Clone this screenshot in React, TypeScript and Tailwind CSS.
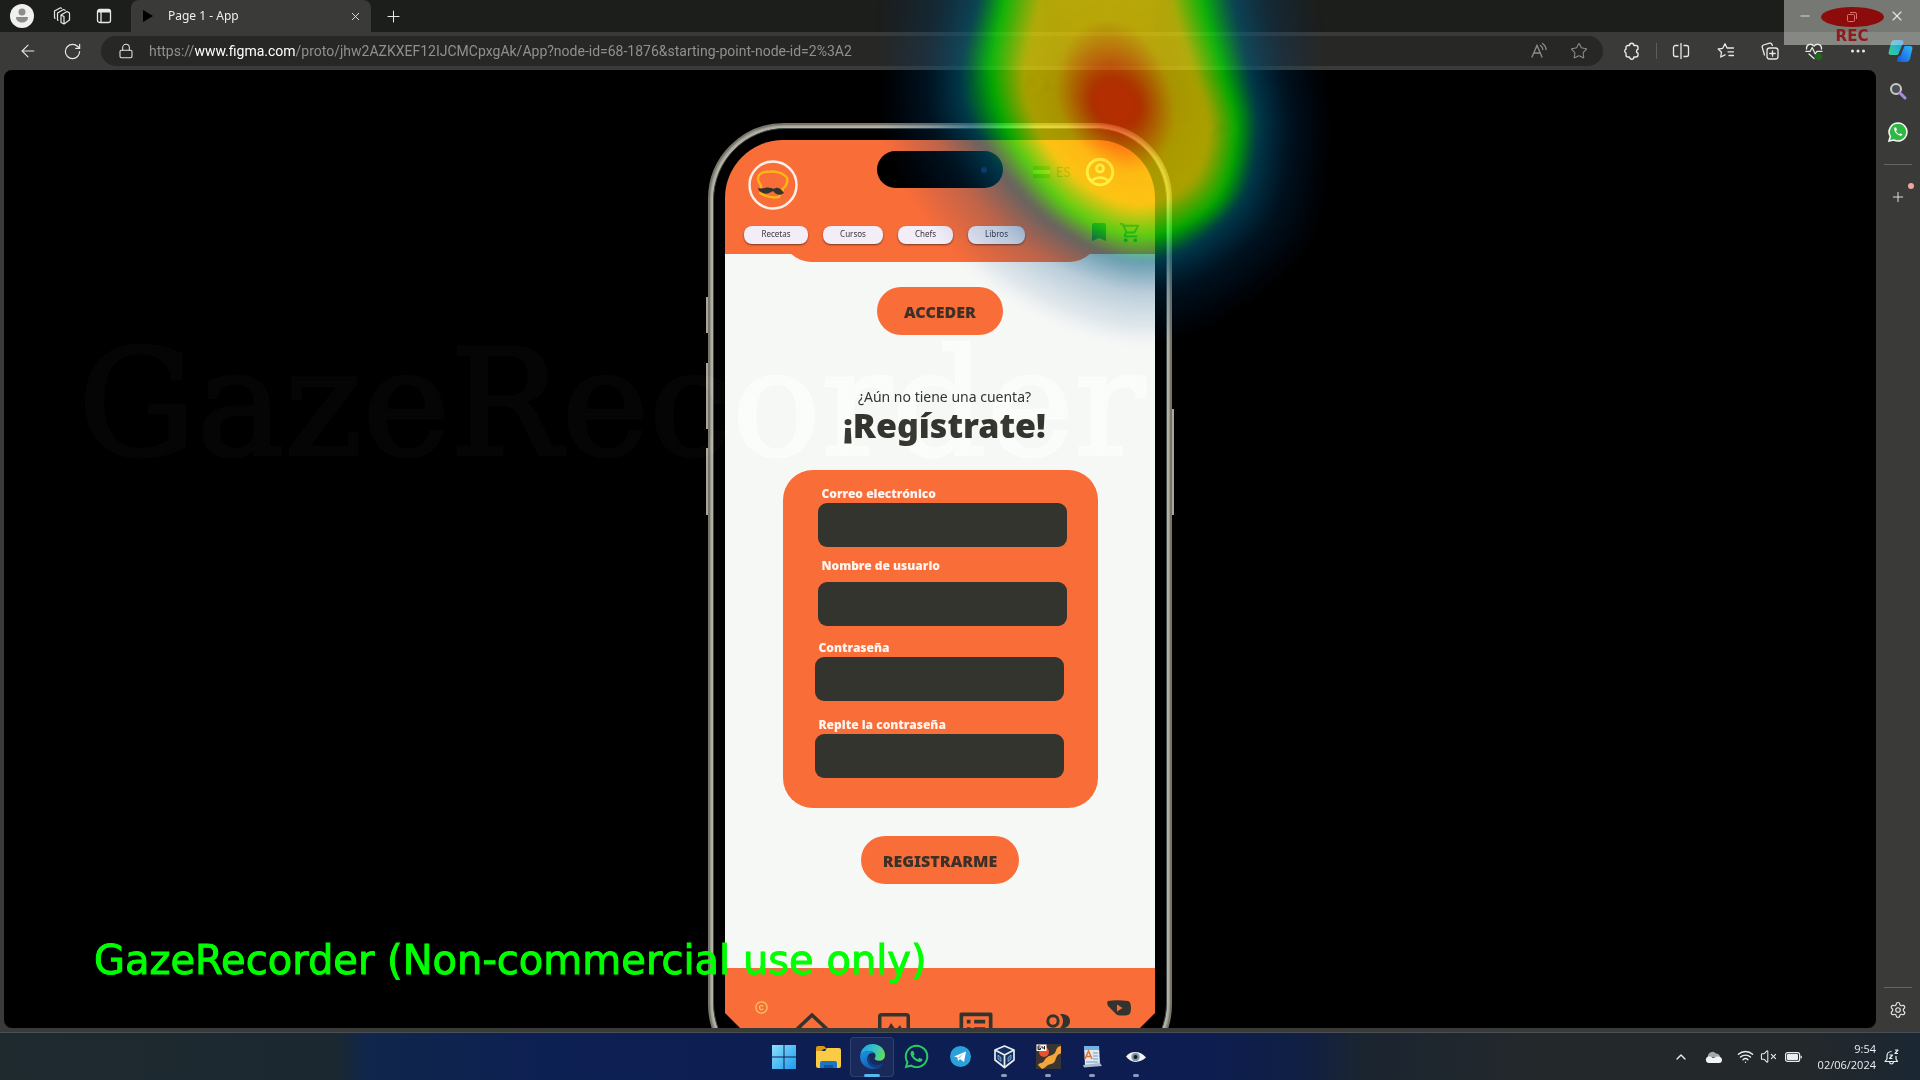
import React from "react";
import { Lock, Star, X, Plus, Minus, ChevronUp, Wifi, VolumeX, Settings, ArrowLeft, RotateCw } from "lucide-react";
import { MdBookmark, MdOutlineShoppingCart, MdOutlineAccountCircle, MdListAlt, MdCopyright } from "react-icons/md";
import { FaWhatsapp } from "react-icons/fa";

type Pt = [number, number];
type Contour = { pts: Pt[]; color: [number, number, number]; alpha: number };

const contours: Contour[] = [
  {
    pts: [[1100, -220], [1310, -100], [1318, 0], [1325, 70], [1330, 150], [1300, 262], [1155, 345], [995, 290], [895, 170], [880, 70], [880, 0], [883, -100]],
    color: [0, 60, 140],
    alpha: 0,
  },
  {
    pts: [[1100, -180], [1265, -80], [1270, 0], [1283, 70], [1290, 140], [1262, 233], [1152, 293], [1025, 248], [940, 145], [926, 70], [936, 0], [944, -80]],
    color: [0, 75, 130],
    alpha: 0.24,
  },
  {
    pts: [[1100, -140], [1230, -60], [1233, 0], [1249, 70], [1258, 135], [1233, 212], [1147, 261], [1050, 220], [975, 130], [962, 70], [978, 0], [985, -60]],
    color: [0, 95, 125],
    alpha: 0.62,
  },
  {
    pts: [[1103, -120], [1200, -60], [1203, 0], [1223, 70], [1237, 132], [1216, 202], [1147, 237], [1073, 212], [1012, 140], [991, 70], [1003, 0], [1010, -60]],
    color: [0, 255, 0],
    alpha: 0.7,
  },
  {
    pts: [[1107, -90], [1165, -60], [1170, 0], [1193, 70], [1210, 128], [1191, 182], [1137, 205], [1081, 180], [1039, 130], [1025, 75], [1041, 0], [1048, -60]],
    color: [255, 240, 0],
    alpha: 0.7,
  },
  {
    pts: [[1107, 22], [1135, 32], [1157, 55], [1172, 88], [1175, 122], [1162, 157], [1132, 173], [1094, 158], [1068, 130], [1055, 95], [1061, 57], [1079, 32]],
    color: [255, 225, 0],
    alpha: 0.7,
  },
  {
    pts: [[1112, 80], [1124, 84], [1134, 92], [1139, 103], [1138, 115], [1130, 124], [1117, 127], [1104, 122], [1096, 112], [1093, 101], [1095, 91], [1102, 83]],
    color: [255, 66, 0],
    alpha: 0.7,
  },
];

function smoothPath(pts: Pt[]) {
  const n = pts.length;
  let d = `M${pts[0][0]} ${pts[0][1]}`;
  for (let i = 0; i < n; i++) {
    const a = pts[(i - 1 + n) % n];
    const b = pts[i];
    const c = pts[(i + 1) % n];
    const e = pts[(i + 2) % n];
    d += `C${b[0] + (c[0] - a[0]) / 6} ${b[1] + (c[1] - a[1]) / 6} ${c[0] - (e[0] - b[0]) / 6} ${c[1] - (e[1] - b[1]) / 6} ${c[0]} ${c[1]}`;
  }
  return d + "Z";
}

const STEPS = 14;
const rings: { d: string; fill: string }[] = [];
for (let k = 0; k < contours.length - 1; k++) {
  const a = contours[k];
  const b = contours[k + 1];
  const at = (t: number) => smoothPath(a.pts.map((p, i) => [p[0] + (b.pts[i][0] - p[0]) * t, p[1] + (b.pts[i][1] - p[1]) * t] as Pt));
  for (let s = 0; s < STEPS; s++) {
    const t = (s + 0.5) / STEPS;
    const c = a.color.map((v, i) => Math.round(v + (b.color[i] - v) * t));
    rings.push({
      d: at(s / STEPS) + at((s + 1) / STEPS),
      fill: `rgba(${c[0]},${c[1]},${c[2]},${a.alpha + (b.alpha - a.alpha) * t})`,
    });
  }
}
const core = contours[contours.length - 1];
rings.push({ d: smoothPath(core.pts), fill: `rgba(${core.color.join(",")},${core.alpha})` });

function Heatmap() {
  return (
    <svg className="pointer-events-none absolute top-0 left-1/2 z-20 -ml-[960px] h-[400px] w-[1920px]" viewBox="0 0 1920 400" aria-hidden="true">
      <defs>
        <filter id="soft" x="-10%" y="-10%" width="120%" height="120%" colorInterpolationFilters="sRGB">
          <feGaussianBlur stdDeviation="3" />
        </filter>
      </defs>
      <g filter="url(#soft)">
        {rings.map((r, i) => (
          <path key={i} d={r.d} fill={r.fill} fillRule="evenodd" />
        ))}
      </g>
    </svg>
  );
}

function IconButton({ label, className = "", children }: { label: string; className?: string; children: React.ReactNode }) {
  return (
    <button aria-label={label} className={`flex shrink-0 items-center justify-center text-[#e8e9e6] ${className}`}>
      {children}
    </button>
  );
}

function TitleBar() {
  return (
    <header className="flex h-8 shrink-0 items-center bg-[#1c1e1b]">
      <IconButton label="Profile" className="w-11">
        <svg width="24" height="24" viewBox="0 0 24 24">
          <circle cx="12" cy="12" r="12" fill="#f0f1ef" />
          <circle cx="12" cy="8" r="3.500" fill="#8c8d8b" />
          <path d="M6 13h12c0 4-3 5.500-6 5.500s-6-1.500-6-5.500z" fill="#8c8d8b" />
        </svg>
      </IconButton>
      <IconButton label="Workspaces" className="w-9">
        <svg width="18" height="18" viewBox="0 0 18 18" fill="none" stroke="currentColor" strokeWidth="1.200" strokeLinejoin="round">
          <path d="M8 8l6-3.500 2.500 1.500v7L11 17l-3-1.500zM8 8l3 1.500V17" />
          <path d="M5.500 13.500l-1-.5V6l6-3.500 2 1M2.500 11.500l-1-.5V4l6-3.200 1.500.7" />
        </svg>
      </IconButton>
      <IconButton label="Tab actions" className="w-12">
        <svg width="16" height="16" viewBox="0 0 16 16" fill="none" stroke="currentColor" strokeWidth="1.300">
          <rect x="1.500" y="1.500" width="13" height="13" rx="2" />
          <path d="M2 3h12" strokeWidth="3" />
          <path d="M5 4v10" />
        </svg>
      </IconButton>
      <div className="ml-[3px] flex h-full w-60 items-center rounded-t-lg bg-[#3a3b38] pr-2 pl-3">
        <svg width="10" height="12" viewBox="0 0 10 12">
          <path d="M0 0l10 6-10 6z" fill="#000" />
        </svg>
        <span className="ml-[15px] grow font-['Noto_Sans',sans-serif] text-[12px] text-[#eeefec]">Page 1 - App</span>
        <IconButton label="Close tab" className="w-4">
          <X size={13} strokeWidth={1.7} />
        </IconButton>
      </div>
      <IconButton label="New tab" className="w-11">
        <Plus size={19} strokeWidth={1.3} />
      </IconButton>
      <div className="grow" />
      <IconButton label="Minimize" className="w-[46px]">
        <Minus size={14} strokeWidth={1.5} />
      </IconButton>
      <IconButton label="Restore" className="w-[46px]">
        <svg width="12" height="12" viewBox="0 0 12 12" fill="none" stroke="currentColor">
          <rect x="1.500" y="3.500" width="7" height="7" rx="1" />
          <path d="M4 1.500h5a1.500 1.500 0 0 1 1.500 1.500v5" />
        </svg>
      </IconButton>
      <IconButton label="Close" className="w-[46px]">
        <X size={16} strokeWidth={1.7} />
      </IconButton>
    </header>
  );
}

function Toolbar() {
  return (
    <nav className="flex h-[38px] shrink-0 items-center bg-[#3a3b38] pl-1 font-['Noto_Sans',sans-serif]">
      <IconButton label="Back" className="w-12">
        <ArrowLeft size={20} strokeWidth={1.3} />
      </IconButton>
      <IconButton label="Refresh" className="w-10">
        <RotateCw size={19} strokeWidth={1.5} />
      </IconButton>
      <div className="ml-[9px] flex h-[30px] min-w-0 grow items-center rounded-full bg-[#272826] pl-[17px]">
        <Lock size={16} strokeWidth={1.6} className="shrink-0 text-[#e0e1de]" />
        <a href="#address" className="ml-[15px] grow truncate font-[Roboto,sans-serif] text-[14px] text-[#90918f]">
          https://<span className="text-white">www.figma.com</span>/proto/jhw2AZKXEF12IJCMCpxgAk/App?node-id=68-1876&amp;starting-point-node-id=2%3A2
        </a>
        <IconButton label="Read aloud" className="w-10">
          <svg width="18" height="18" viewBox="0 0 18 18" fill="none" stroke="#8d8e8b" strokeWidth="1.300" strokeLinecap="round">
            <path d="M2 15L7 3.500 12 15M3.800 11h6.400M10.500 3.500c1.500 1 2.300 2.500 2.300 4M12.500 1.500c2.200 1.500 3.500 3.500 3.500 6" />
          </svg>
        </IconButton>
        <IconButton label="Add to favorites" className="mr-1 w-10">
          <Star size={18} strokeWidth={1.4} color="#8d8e8b" />
        </IconButton>
      </div>
      <IconButton label="Extensions" className="ml-2 w-[42px]">
        <svg width="18" height="18" viewBox="0 0 18 18" fill="none" stroke="currentColor" strokeWidth="1.400" strokeLinejoin="round">
          <path d="M6.500 3.500a2.200 2.200 0 0 1 4.400 0H13a2 2 0 0 1 2 2v1.700a2 2 0 0 0 0 3.900V13a2 2 0 0 1-2 2h-2.100a2.200 2.200 0 0 1-4.400 0H5a2 2 0 0 1-2-2v-1.900a2.200 2.200 0 0 1 0-4V5.500a2 2 0 0 1 2-2z" />
        </svg>
      </IconButton>
      <div className="ml-[3px] h-4 w-px bg-[#5d5e5b]" />
      <IconButton label="Split screen" className="w-[47px]">
        <svg width="18" height="18" viewBox="0 0 18 18" fill="none" stroke="currentColor" strokeWidth="1.300">
          <path d="M6.500 3.500h-3a2 2 0 0 0-2 2v7a2 2 0 0 0 2 2h3M11.500 3.500h3a2 2 0 0 1 2 2v7a2 2 0 0 1-2 2h-3M9 1v16" />
        </svg>
      </IconButton>
      <IconButton label="Favorites" className="w-11">
        <svg width="18" height="18" viewBox="0 0 18 18" fill="none" stroke="currentColor" strokeWidth="1.300" strokeLinejoin="round" strokeLinecap="round">
          <path d="M10 6L8 1.800 5.700 6.300 1.200 7l3.300 3.200-.8 4.800L8 12.800M10 6h6.500M11 9.800h5.500M12 13.500h4.500" />
        </svg>
      </IconButton>
      <IconButton label="Collections" className="w-11">
        <svg width="18" height="18" viewBox="0 0 18 18" fill="none" stroke="currentColor" strokeWidth="1.300" strokeLinejoin="round" strokeLinecap="round">
          <rect x="6" y="6" width="11" height="11" rx="2.500" />
          <path d="M11.500 8.800v5.400M8.800 11.500h5.400M3.500 13L1.300 5.500A2 2 0 0 1 2.600 3l6-1.800A2 2 0 0 1 11 2.500l.3 1" />
        </svg>
      </IconButton>
      <IconButton label="Browser essentials" className="w-11">
        <svg width="18" height="18" viewBox="0 0 18 18" fill="none" stroke="currentColor" strokeWidth="1.300" strokeLinejoin="round" strokeLinecap="round">
          <path d="M1.500 7C1 3 5.500.5 9 4c3.500-3.500 8-1 7.500 3M.8 9.300h4.400l2-3.800 3 6.500 1.800-2.700h5M4 12l5 4.500" />
          <circle cx="13.500" cy="14.500" r="3.500" fill="#1c6b1d" stroke="none" />
        </svg>
      </IconButton>
      <IconButton label="More" className="w-11">
        <svg width="16" height="4" viewBox="0 0 16 4" fill="currentColor">
          <circle cx="2.500" cy="2" r="1.500" />
          <circle cx="8" cy="2" r="1.500" />
          <circle cx="13.500" cy="2" r="1.500" />
        </svg>
      </IconButton>
      <IconButton label="Copilot" className="w-10">
        <svg width="25" height="24" viewBox="0 0 25 24">
          <defs>
            <linearGradient id="cpa" x1="0" y1="1" x2="1" y2="0">
              <stop offset="0" stopColor="#3bd08b" />
              <stop offset="0.500" stopColor="#27b6c9" />
              <stop offset="1" stopColor="#1c8ff0" />
            </linearGradient>
            <linearGradient id="cpb" x1="0" y1="1" x2="1" y2="0">
              <stop offset="0" stopColor="#1656e0" />
              <stop offset="1" stopColor="#2fb8f8" />
            </linearGradient>
          </defs>
          <path d="M6 1h7q3 0 2.300 3L13 13q-1 3-4 3H3q-3 0-2.300-3L3 4q1-3 3-3z" fill="url(#cpa)" />
          <path d="M15 7h7q3 0 2.300 3L22 20q-1 3-4 3h-7q-3 0-1.500-3z" fill="url(#cpb)" />
          <path d="M15.500 6L11 17" stroke="#3a3b38" strokeWidth="2.500" />
        </svg>
      </IconButton>
    </nav>
  );
}

function WhatsappBadge() {
  return (
    <svg width="20" height="20" viewBox="0 0 20 20">
      <path d="M10 1a9 9 0 1 1-4.200 17L1 19l1.300-4.500A9 9 0 0 1 10 1z" fill="#2fb944" stroke="#f3f4f2" strokeWidth="1.600" />
      <path d="M6.500 5.500c-1 2 .5 5 2.500 6.500s4.300 2.500 5.500.8l-2-1.600-1.300 1C9.800 11.700 8.600 10.500 8 9l1-1.200-1-2.300z" fill="#fff" />
    </svg>
  );
}

function Sidebar() {
  return (
    <aside className="relative flex w-11 shrink-0 flex-col items-center bg-[#3a3b38] pt-3">
      <IconButton label="Search" className="h-[18px] w-8">
        <svg width="18" height="18" viewBox="0 0 18 18" fill="none">
          <circle cx="7" cy="7" r="5" stroke="#c9cac9" strokeWidth="2" fill="#4c5052" />
          <path d="M11 11l5 5" stroke="#a88be0" strokeWidth="3" strokeLinecap="round" />
        </svg>
      </IconButton>
      <IconButton label="WhatsApp" className="mt-[22px] h-5 w-8">
        <WhatsappBadge />
      </IconButton>
      <div className="mt-[22px] h-px w-7 bg-[#656663]" />
      <IconButton label="Add app" className="mt-6 h-4 w-8">
        <Plus size={16} strokeWidth={1.4} />
      </IconButton>
      <span className="absolute top-[113px] right-[6px] size-[6px] rounded-full bg-[#f0a5a0]" />
      <div className="grow" />
      <div className="h-px w-7 bg-[#656663]" />
      <IconButton label="Settings" className="my-[13px] h-[18px] w-8">
        <Settings size={18} strokeWidth={1.5} />
      </IconButton>
    </aside>
  );
}

function PhoneHeader() {
  return (
    <div className="relative z-10 flex flex-col rounded-t-[58px] bg-[#f96d39] pb-[9px]">
      <div className="flex h-[85px] items-start pt-[11px] pl-[23px]">
        <svg className="mt-[9px]" width="50" height="50" viewBox="0 0 50 50" fill="none">
          <circle cx="25" cy="25" r="23.500" stroke="#fff0ea" strokeWidth="2.500" />
          <path d="M13 27c0-4-3-4-3-8 0-5 3-6 7-7 7-1 15 0 19 3 4 2 4 6 2 10-1 3-4 2-4 7M12 33c6 4 14 5 19 4l2-5" stroke="#fbb315" strokeWidth="2.500" strokeLinecap="round" />
          <path d="M10 28c4 2 8-2 13 0 2 1 3 1 5 0 4-1 7 4 8 5-4 3-8 2-11-2-2 1-5 4-10 2-3-1-5-3-5-5z" fill="#34342e" />
        </svg>
        <div className="ml-[79px] flex h-[37px] w-[126px] items-center justify-end rounded-full bg-black pr-4">
          <span className="size-[6px] rounded-full bg-[#16206a]" />
        </div>
        <div className="mt-[15px] ml-[30px] flex h-3 w-[17px] flex-col justify-between">
          <span className="h-1 bg-[#b45c10]" />
          <span className="h-1 bg-[#f6a63a]" />
          <span className="h-1 bg-[#b45c10]" />
        </div>
        <span className="mt-3 ml-[6px] font-['Lato',sans-serif] text-[13px] leading-[18px] text-[#7b4a20]">ES</span>
        <IconButton label="Cuenta" className="mt-[4px] ml-3 size-[34px]">
          <MdOutlineAccountCircle size={34} color="#fff8c0" />
        </IconButton>
      </div>
      <div className="flex h-5 items-center pl-[19px] font-['Noto_Sans',sans-serif] text-[8px] leading-[16px] text-[#39343f]">
        <button className="h-[18px] w-16 rounded-lg bg-[#f2edf6] pb-[2px] shadow-[0_1px_2px_#00000080]">Recetas</button>
        <button className="ml-[15px] h-[18px] w-[60px] rounded-lg bg-[#f2edf6] pb-[2px] shadow-[0_1px_2px_#00000080]">Cursos</button>
        <button className="ml-[15px] h-[18px] w-[55px] rounded-lg bg-[#f2edf6] pb-[2px] shadow-[0_1px_2px_#00000080]">Chefs</button>
        <button className="ml-[15px] h-[18px] w-[57px] rounded-lg bg-[#f2edf6] pb-[2px] shadow-[0_1px_2px_#00000080]">Libros</button>
        <IconButton label="Guardados" className="mb-[6px] ml-[62px] w-6">
          <MdBookmark size={24} color="#34342e" />
        </IconButton>
        <IconButton label="Carrito" className="mb-[6px] ml-[7px] w-6">
          <MdOutlineShoppingCart size={23} color="#34342e" />
        </IconButton>
      </div>
    </div>
  );
}

function Field({ id, label, type, gap }: { id: string; label: string; type: string; gap: string }) {
  return (
    <div className={`flex flex-col ${gap}`}>
      <label htmlFor={id} className="pl-1 font-['Noto_Sans',sans-serif] text-[12px] leading-[17px] font-black text-[#fff5ee]">
        {label}
      </label>
      <input id={id} type={type} className="h-11 w-[249px] rounded-[9px] bg-[#34342e] px-3 text-white" />
    </div>
  );
}

function PhoneFooter() {
  return (
    <div className="relative flex h-[60px] items-start overflow-hidden bg-[#f96d39] [clip-path:polygon(0_0,100%_0,100%_45px,calc(100%-15px)_60px,15px_60px,0_45px)]">
      <MdCopyright className="mt-8 ml-[29px] shrink-0" size={15} color="#fbc75e" />
      <IconButton label="Inicio" className="mt-[45px] ml-[25px] w-9">
        <svg width="36" height="36" viewBox="0 0 36 36" fill="none" stroke="#34342e" strokeWidth="3.500">
          <path d="M1 18L18 2l17 16M6 14v20h24V14" />
        </svg>
      </IconButton>
      <IconButton label="Galería" className="mt-[45px] ml-12 w-8">
        <svg width="32" height="30" viewBox="0 0 32 30" fill="none" stroke="#34342e" strokeWidth="3.500">
          <rect x="1.750" y="1.750" width="28.500" height="26.500" rx="2" />
          <path d="M5 24l8-14 5 7 4-5 6 12z" fill="#34342e" stroke="none" />
        </svg>
      </IconButton>
      <IconButton label="Lista" className="mt-[38px] ml-11 w-11">
        <MdListAlt size={46} color="#34342e" />
      </IconButton>
      <IconButton label="Comunidad" className="mt-[46px] ml-12 w-6">
        <svg width="24" height="16" viewBox="0 0 24 16">
          <circle cx="7" cy="7" r="5.200" fill="none" stroke="#34342e" strokeWidth="3" />
          <path d="M14 0c4-.5 10 1 10 7s-6 8-10 7c4-4 4-10 0-14z" fill="#34342e" />
        </svg>
      </IconButton>
      <IconButton label="Vídeos" className="mt-8 ml-[37px] w-6">
        <svg width="24" height="16" viewBox="0 0 24 16">
          <path d="M1 1Q10-.5 21 1q3 1 3 7t-3 7q-5 1-11 0L1 6Q-.5 2 1 1z" fill="#34342e" />
          <path d="M10 4.500l5.500 3.500-5.500 3.500z" fill="#f96d39" />
        </svg>
      </IconButton>
    </div>
  );
}

function Phone() {
  return (
    <div className="relative w-[464px] shrink-0">
      <span className="absolute top-[174px] -left-[2px] h-9 w-1 bg-[#a9a698]" />
      <span className="absolute top-[240px] -left-[2px] h-[66px] w-1 bg-[#a9a698]" />
      <span className="absolute top-[325px] -left-[2px] h-[67px] w-1 bg-[#a9a698]" />
      <span className="absolute top-[286px] -right-[2px] h-[106px] w-1 bg-[#a9a698]" />
      <div className="relative rounded-[76px] border-2 border-[#77756a] bg-[#b5b3a7] p-[3px] shadow-[inset_0_0_2px_#55534a]">
        <div className="rounded-[72px] border border-[#3d4644] bg-black px-[11px] pt-[11px] pb-[46px]">
          <PhoneHeader />
          <div className="flex flex-col items-center bg-[#f6f8f6] pb-[84px]">
            <div className="-mt-[22px] h-[30px] w-[315px] rounded-b-[28px] bg-[#f96d39]" />
            <button className="mt-[25px] h-12 w-[126px] rounded-full bg-[#f96d39] pt-[2px] font-['Noto_Sans',sans-serif] text-[16px] font-black text-[#3c3027]">ACCEDER</button>
            <p className="mt-[52px] pl-[9px] font-['Noto_Sans',sans-serif] text-[14px] leading-5 text-[#34342e]">¿Aún no tiene una cuenta?</p>
            <h1 className="pl-[9px] font-['Noto_Sans',sans-serif] text-[34px] leading-9 font-black text-[#34342e]">¡Regístrate!</h1>
            <form className="mt-[27px] flex w-[315px] flex-col rounded-[30px] bg-[#f96d39] pt-[15px] pb-[30px] pl-8">
              <div className="flex flex-col pl-[3px]">
                <Field id="correo" label="Correo electrónico" type="email" gap="gap-px" />
                <div className="h-[10px]" />
                <Field id="usuario" label="Nombre de usuario" type="text" gap="gap-2" />
              </div>
              <div className="h-[13px]" />
              <Field id="clave" label="Contraseña" type="password" gap="gap-px" />
              <div className="h-[15px]" />
              <Field id="repite" label="Repite la contraseña" type="password" gap="gap-px" />
            </form>
            <button className="mt-7 h-12 w-[158px] rounded-full bg-[#f96d39] pt-[2px] font-['Noto_Sans',sans-serif] text-[16px] font-black text-[#3c3027]">REGISTRARME</button>
          </div>
          <PhoneFooter />
        </div>
      </div>
    </div>
  );
}

function EdgeLogo() {
  return (
    <svg width="25" height="25" viewBox="0 0 24 24">
      <defs>
        <linearGradient id="eg" x1="0" y1="0.300" x2="1" y2="0.500">
          <stop offset="0" stopColor="#1fa4e8" />
          <stop offset="0.600" stopColor="#35c6c0" />
          <stop offset="1" stopColor="#66dc54" />
        </linearGradient>
        <linearGradient id="eb" x1="0" y1="0" x2="0.600" y2="1">
          <stop offset="0" stopColor="#2196e3" />
          <stop offset="1" stopColor="#1254a8" />
        </linearGradient>
      </defs>
      <path d="M.2 11C1 4.500 6 0 12 0c7 0 12 5 12 10.500 0 4-3 5.500-5.500 5.500-3 0-4.500-1-4.500-2 0-.7 1-1 1-2.700C15 8.500 12 6.800 8.500 6.800 4.500 6.800 1.500 8.500.2 11z" fill="url(#eg)" />
      <path d="M.2 11C1.500 8.500 4.500 6.800 8.500 6.800c2 0 4 .5 5.200 1.700C9 8 7 11 7 14.500c0 5 4.500 8 8 8 2.500 0 4.500-1 6.500-2.200C19.500 22.800 16 24 12 24 5 24-.6 18 .2 11z" fill="url(#eb)" />
      <path d="M9.500 12c-1.500 4.500 2 8 6.500 8 3 0 5-1 6.300-1.300C20 22 17.500 23 15 22.500c-4.500 0-8-3.500-8-8 0-1.200.8-2.200 2.500-2.500z" fill="#0c3f86" />
    </svg>
  );
}

function TaskItem({ label, dot, children }: { label: string; dot?: boolean; children: React.ReactNode }) {
  return (
    <button aria-label={label} className="relative flex h-10 w-11 items-center justify-center">
      {children}
      {dot && <span className="absolute bottom-0 left-1/2 -ml-[3px] h-[3px] w-[6px] rounded-full bg-[#8d9bbd]" />}
    </button>
  );
}

function Taskbar() {
  return (
    <footer className="grid h-12 shrink-0 grid-cols-[1fr_auto_1fr] items-center border-t border-[#4a4e55] bg-[linear-gradient(90deg,#1f2a2f_0%,#1b2830_17.500%,#10264b_19%,#0d2052_28%,#0d1d52_62%,#101f42_68%,#1b2530_71%,#23282b_80%,#23282b_94%,#1b2733_100%)] font-['Noto_Sans',sans-serif] text-[#eceded]">
      <div />
      <div className="flex">
        <TaskItem label="Inicio">
          <svg width="24" height="24" viewBox="0 0 24 24">
            <defs>
              <linearGradient id="wn" x1="0" y1="0" x2="1" y2="1">
                <stop offset="0" stopColor="#8be0fb" />
                <stop offset="1" stopColor="#1b9bec" />
              </linearGradient>
            </defs>
            <path d="M0 0h11.500v11.500H0zM12.500 0H24v11.500H12.500zM0 12.500h11.500V24H0zM12.500 12.500H24V24H12.500z" fill="url(#wn)" />
          </svg>
        </TaskItem>
        <TaskItem label="Explorador de archivos">
          <svg width="25" height="24" viewBox="0 0 25 24">
            <path d="M0 3q0-2 2-2h6l3 3h-3l-8 6z" fill="#d99a16" />
            <path d="M0 6h9l2-3h12q2 0 2 2v16q0 2-2 2H2q-2 0-2-2z" fill="#fbcb45" />
            <path d="M4 23v-5q0-2 2-2h13q2 0 2 2v5z" fill="#1a76c2" />
            <path d="M8 20h9v3H8z" fill="#10569a" />
          </svg>
        </TaskItem>
        <div className="relative w-11 rounded border border-white/10 bg-white/5">
          <div className="-m-px">
            <TaskItem label="Microsoft Edge">
              <EdgeLogo />
            </TaskItem>
          </div>
          <span className="absolute -bottom-px left-1/2 -ml-2 h-[3px] w-4 rounded-full bg-[#58b8f0]" />
        </div>
        <TaskItem label="WhatsApp">
          <FaWhatsapp size={27} color="#27cc64" />
        </TaskItem>
        <TaskItem label="Telegram">
          <svg width="21" height="21" viewBox="0 0 21 21">
            <circle cx="10.500" cy="10.500" r="10.500" fill="#2ba1dc" />
            <path d="M4 10.500l12-5-2 10.500-4-3-2 2-.5-3.500z" fill="#fff" />
            <path d="M8 11.500l5.500-4-4 5z" fill="#9ccbea" />
          </svg>
        </TaskItem>
        <TaskItem label="VirtualBox" dot>
          <svg width="21" height="24" viewBox="0 0 21 24" fill="#14305f" stroke="#e8edf4" strokeWidth="1.700" strokeLinejoin="round">
            <path d="M10.500 1L20 5v10l-9.500 7.500L1 15V5z" />
            <path d="M1 5l9.500 5L20 5M10.500 10v12" />
            <path d="M4 10v4l3 2.500v-4zM14 12.500v4l3-2.500v-4z" fill="#2d5e9e" strokeWidth="0.500" />
          </svg>
        </TaskItem>
        <TaskItem label="Grabadora" dot>
          <svg width="25" height="25" viewBox="0 0 25 25">
            <rect width="25" height="25" fill="#3a3432" />
            <path d="M25 2c-7 1-3 7-9 9S10 14 8 17s-4 1-6 4l4 4c4-1 4-4 9-5s4-5 6-8 4-1 4-4z" fill="#f5a63a" />
            <circle cx="8" cy="8" r="5" fill="#e8512b" />
            <rect x="0.500" y="0.500" width="10" height="6.500" fill="#fff" />
            <path d="M4.500 2H2v3.500h2.500V4H2M6 2v2h2.500M8.500 2v3.500" stroke="#222" fill="none" />
          </svg>
        </TaskItem>
        <TaskItem label="Bloc de texto" dot>
          <svg width="20" height="23" viewBox="0 0 20 23">
            <path d="M2 1h15l1 19H3z" fill="#dfeaf4" />
            <path d="M2 1h15v4H2z" fill="#72b3e2" />
            <path d="M3 14L6.500 6 10 14M4.500 11.500h4" stroke="#e2762c" strokeWidth="1.600" fill="none" />
            <path d="M11 8h5M11 11h5M11 14h5M4 17h12" stroke="#6d9bc4" />
            <path d="M1 20l17-2 2 3-18 1.500z" fill="#a9bccd" />
          </svg>
        </TaskItem>
        <TaskItem label="GazeRecorder" dot>
          <svg width="20" height="12" viewBox="0 0 20 12">
            <path d="M0 5.500C5-.5 14-.5 20 6.500 13 12.500 5 12.500 0 5.500z" fill="#f2f4f6" />
            <circle cx="9.500" cy="6" r="4.200" fill="#7f97a5" />
            <circle cx="9.500" cy="6" r="2" fill="#10202c" />
          </svg>
        </TaskItem>
      </div>
      <div className="flex items-center justify-end pr-5">
        <ChevronUp size={16} strokeWidth={2} />
        <svg className="ml-4" width="17" height="12" viewBox="0 0 17 12">
          <path d="M3 6a4.500 4.500 0 0 1 8-3.500 4 4 0 0 1 4 3.500z" fill="#a5a8aa" />
          <path d="M3 12a3.500 3.500 0 0 1 0-6.500c2-.5 3 .5 5 1.500l4-1.500c3-.5 5 1 5 3.500a3 3 0 0 1-3 3z" fill="#f2f3f3" />
        </svg>
        <Wifi className="ml-[15px]" size={17} strokeWidth={2} />
        <VolumeX className="ml-[6px]" size={17} strokeWidth={1.5} />
        <svg className="ml-2" width="17" height="10" viewBox="0 0 17 10">
          <rect x="0.600" y="0.600" width="14" height="8.800" rx="2" fill="none" stroke="#eceded" strokeWidth="1.200" />
          <rect x="2" y="2" width="11" height="6" rx="1" fill="#eceded" />
          <path d="M15.500 3.500q1.500 0 1.500 1.500t-1.500 1.500z" fill="#eceded" />
        </svg>
        <div className="ml-4 text-right font-['Open_Sans',sans-serif] text-[11px] leading-4">
          <div>9:54</div>
          <div>02/06/2024</div>
        </div>
        <svg className="ml-2" width="16" height="16" viewBox="0 0 16 16" fill="none" stroke="#eceded" strokeWidth="1.200" strokeLinejoin="round">
          <path d="M7.500 2.500C4.500 2.500 3 4.500 3 7v3l-2 2.500h12.500L12 10V7M5.500 13q.5 2 2 2t2-2" />
          <path d="M5.500 6h3L5.500 9.500h3M11 1h3L11 4.500h3" />
        </svg>
      </div>
    </footer>
  );
}

function RecBadge() {
  return (
    <div className="pointer-events-none absolute top-0 right-0 z-30 flex h-[45px] w-[136px] flex-col items-center bg-[#e4e6e0]/45 pt-[7px]">
      <span className="flex h-5 w-[63px] items-center justify-center rounded-[50%] bg-[#8c0c0c]">
        <svg width="12" height="12" viewBox="0 0 12 12" fill="none" stroke="#e07070">
          <rect x="1.500" y="3.500" width="7" height="7" rx="1" />
          <path d="M4 1.500h5a1.500 1.500 0 0 1 1.500 1.500v5" />
        </svg>
      </span>
      <span className="mt-[2px] font-['DejaVu_Sans',sans-serif] text-[15px] leading-[14px] font-bold text-[#8f1a1a]">REC</span>
    </div>
  );
}

export default function App() {
  return (
    <div className="relative flex h-screen flex-col overflow-hidden bg-[#3a3b38]">
      <TitleBar />
      <Toolbar />
      <div className="flex min-h-0 grow">
        <main className="mb-1 ml-1 flex min-w-0 grow justify-center overflow-hidden rounded-lg bg-black pt-[53px]">
          <div className="flex items-start">
            <Phone />
          </div>
        </main>
        <Sidebar />
      </div>
      <Taskbar />
      <div className="pointer-events-none absolute top-[318px] left-[78px] z-20 w-[1077px] overflow-hidden font-['DejaVu_Serif',serif] text-[148px] leading-[172px] whitespace-nowrap text-[#050505] mix-blend-plus-lighter [-webkit-text-stroke:3px_#050505]">GazeRecorder</div>
      <Heatmap />
      <RecBadge />
      <div className="pointer-events-none absolute top-[936px] left-[94px] z-20 font-['DejaVu_Sans',sans-serif] text-[40px] leading-[48px] whitespace-nowrap text-[#00ff00] [-webkit-text-stroke:1px_#00ff00]">GazeRecorder (Non-commercial use only)</div>
    </div>
  );
}
